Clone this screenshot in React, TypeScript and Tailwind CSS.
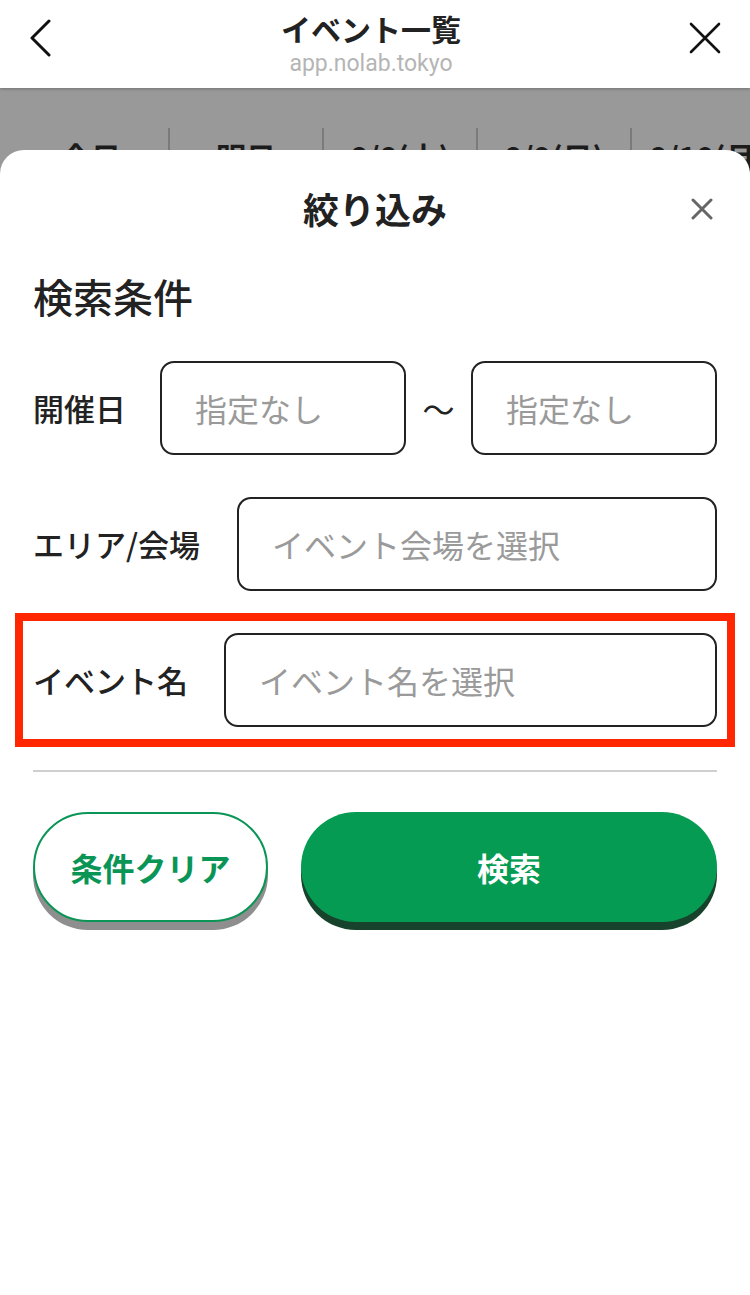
import React from 'react';

const tabs = ['今日', '明日', '8/8(土)', '8/9(日)', '8/10(月)'];

const Field: React.FC<{ placeholder: string; className?: string }> = ({ placeholder, className = '' }) => (
  <div
    className={`h-[94px] border-2 border-[#222] rounded-[14px] flex items-center pl-[33px] text-[32px] text-[#9a9a9a] bg-white whitespace-nowrap ${className}`}
  >
    {placeholder}
  </div>
);

const App: React.FC = () => {
  return (
    <div
      className="w-[750px] h-[1295px] flex flex-col bg-[#999] overflow-hidden text-[#222]"
      style={{ fontFamily: '"Noto Sans CJK JP", "Noto Sans", sans-serif' }}
    >
      {/* browser header */}
      <header className="relative z-20 h-[88px] shrink-0 bg-white flex items-center justify-between px-[28px] shadow-[0_1px_3px_rgba(0,0,0,0.25)]">
        <svg width="26" height="38" viewBox="0 0 26 38" fill="none" className="-mt-[12px]">
          <path d="M21 2 L4 19 L21 36" stroke="#111" strokeWidth="3" strokeLinecap="round" strokeLinejoin="round" />
        </svg>
        <div className="flex flex-col items-center -mt-[1px]">
          <span className="text-[30px] font-bold leading-[36px]">イベント一覧</span>
          <span className="text-[23px] leading-[28px] mt-[4px] text-[#b5b5b5]" style={{ fontFamily: 'Roboto, "Noto Sans", sans-serif' }}>
            app.nolab.tokyo
          </span>
        </div>
        <svg width="34" height="34" viewBox="0 0 34 34" fill="none" className="-mt-[12px]">
          <path d="M3 3 L31 31 M31 3 L3 31" stroke="#111" strokeWidth="2.6" strokeLinecap="round" />
        </svg>
      </header>

      {/* dimmed page behind */}
      <div className="pt-[40px] shrink-0">
        <div className="flex h-[60px] pl-[14px]">
          {tabs.map((t, i) => (
            <div
              key={t}
              className={`w-[154px] shrink-0 flex justify-center pt-[6px] text-[30px] font-bold text-[#1c1c1c] whitespace-nowrap ${i > 0 ? 'border-l-2 border-[#7a7a7a]' : ''}`}
            >
              {t}
            </div>
          ))}
        </div>
      </div>

      {/* bottom sheet */}
      <div className="relative z-10 -mt-[38px] flex-1 bg-white rounded-t-[24px] px-[33px] flex flex-col">
        <div className="relative pt-[36px] flex justify-center">
          <h2 className="text-[36px] leading-[44px] font-bold">絞り込み</h2>
          <svg width="22" height="22" viewBox="0 0 22 22" className="absolute right-[4px] top-[48px]">
            <path d="M2 2 L20 20 M20 2 L2 20" stroke="#666" strokeWidth="3" strokeLinecap="round" />
          </svg>
        </div>

        <h3 className="mt-[42px] text-[40px] leading-[48px] font-medium">検索条件</h3>

        <div className="mt-[41px] flex items-center">
          <span className="text-[31px] font-medium w-[127px] shrink-0">開催日</span>
          <Field placeholder="指定なし" className="w-[246px]" />
          <span className="w-[65px] text-center text-[32px]">～</span>
          <Field placeholder="指定なし" className="flex-1" />
        </div>

        <div className="mt-[42px] flex items-center gap-[37px]">
          <span className="text-[31px] font-medium shrink-0">エリア/会場</span>
          <Field placeholder="イベント会場を選択" className="flex-1" />
        </div>

        <div className="mt-[22px] -mx-[18px] border-[8px] border-[#ff2600] px-[10px] py-[12px] flex items-center gap-[36px]">
          <span className="text-[31px] font-medium shrink-0">イベント名</span>
          <Field placeholder="イベント名を選択" className="flex-1" />
        </div>

        <div className="mt-[23px] h-[2px] bg-[#cfcfcf]" />

        <div className="mt-[40px] flex gap-[33px]">
          <button className="w-[235px] h-[110px] rounded-full bg-white border-2 border-[#0a9556] text-[#0a9556] text-[32px] font-bold shadow-[0_8px_0_#8e8e8e]">
            条件クリア
          </button>
          <button className="flex-1 h-[110px] rounded-full bg-[#069b53] text-white text-[32px] font-bold shadow-[0_8px_0_#17432c]">
            検索
          </button>
        </div>
      </div>
    </div>
  );
};

export default App;
